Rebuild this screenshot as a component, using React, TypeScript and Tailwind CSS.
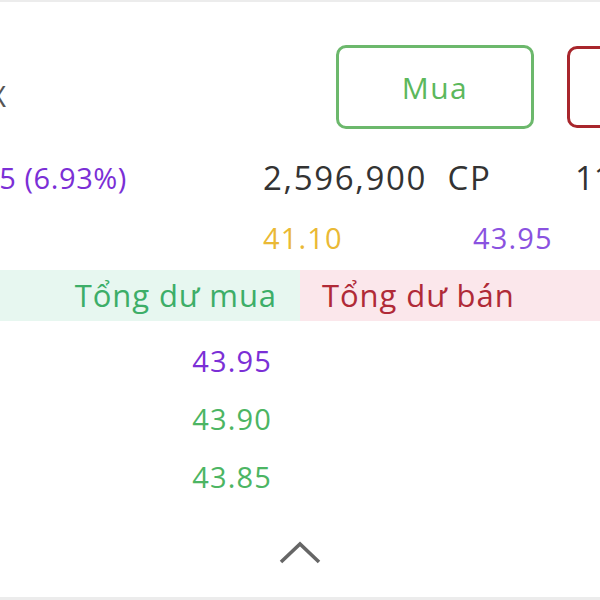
const font = { fontFamily: '"Open Sans", "Noto Sans", sans-serif' };

function OrderRow({ price, tone }: { price: string; tone: string }) {
  return (
    <div className="flex h-[58px] items-center">
      <div className={`w-[300px] pr-[28px] text-right text-[29px] tracking-[0.04em] ${tone}`}>{price}</div>
      <div className="flex-1" />
    </div>
  );
}

export default function App() {
  return (
    <div
      className="w-[600px] h-[600px] overflow-hidden bg-white border-t-2 border-[#ececec] flex flex-col"
      style={font}
    >
      {/* actions */}
      <div className="flex items-center h-[84px] mt-[43px]">
        <div className="w-[6px] flex justify-end shrink-0 pt-[18px]">
          <span className="whitespace-nowrap text-[29px] text-[#555]">HNX</span>
        </div>
        <button className="ml-[330px] w-[198px] h-[84px] shrink-0 rounded-[10px] border-[3px] border-[#6cb86c] text-[30px] tracking-[0.05em] text-[#5cb85c]">
          Mua
        </button>
        <button className="ml-[33px] w-[198px] h-[82px] shrink-0 rounded-[10px] border-[3px] border-[#a8262c] text-[30px] text-[#a8262c]">
          Bán
        </button>
      </div>

      {/* quote */}
      <div className="flex items-center h-[44px] mt-[27px]">
        <div className="w-[127px] flex justify-end shrink-0">
          <span className="whitespace-nowrap text-[29px] tracking-[0.02em] text-[#7b2fd6]">+2.85 (6.93%)</span>
        </div>
        <div className="ml-[136px] w-[312px] shrink-0 whitespace-nowrap text-[33px] tracking-[0.05em] text-[#333]">
          2,596,900&nbsp; CP
        </div>
        <div className="whitespace-nowrap text-[33px] text-[#333]">110,000</div>
      </div>

      <div className="flex items-center h-[40px] mt-[18px]">
        <div className="ml-[263px] w-[210px] shrink-0 text-[29px] tracking-[0.04em] text-[#eab935]">41.10</div>
        <div className="text-[29px] tracking-[0.04em] text-[#8a52e0]">43.95</div>
      </div>

      {/* order book header */}
      <div className="flex h-[51px] mt-[12px]">
        <div className="w-[300px] bg-[#e7f7f0] flex items-center justify-end pr-[23px] text-[31px] tracking-[0.03em] text-[#3dae68]">
          Tổng dư mua
        </div>
        <div className="flex-1 bg-[#fbe7eb] flex items-center pl-[22px] text-[31px] tracking-[0.03em] text-[#b02a37]">
          Tổng dư bán
        </div>
      </div>

      <div className="mt-[11px]">
        <OrderRow price="43.95" tone="text-[#7b2fd6]" />
        <OrderRow price="43.90" tone="text-[#4cb563]" />
        <OrderRow price="43.85" tone="text-[#4cb563]" />
      </div>

      <div className="flex justify-center mt-[35px]">
        <svg width="42" height="24" viewBox="0 0 42 24" fill="none">
          <polyline points="2,21 21,3 40,21" stroke="#666" strokeWidth="3.6" strokeLinejoin="miter" />
        </svg>
      </div>

      <div className="mt-auto h-[3px] bg-[#ececec]" />
    </div>
  );
}
